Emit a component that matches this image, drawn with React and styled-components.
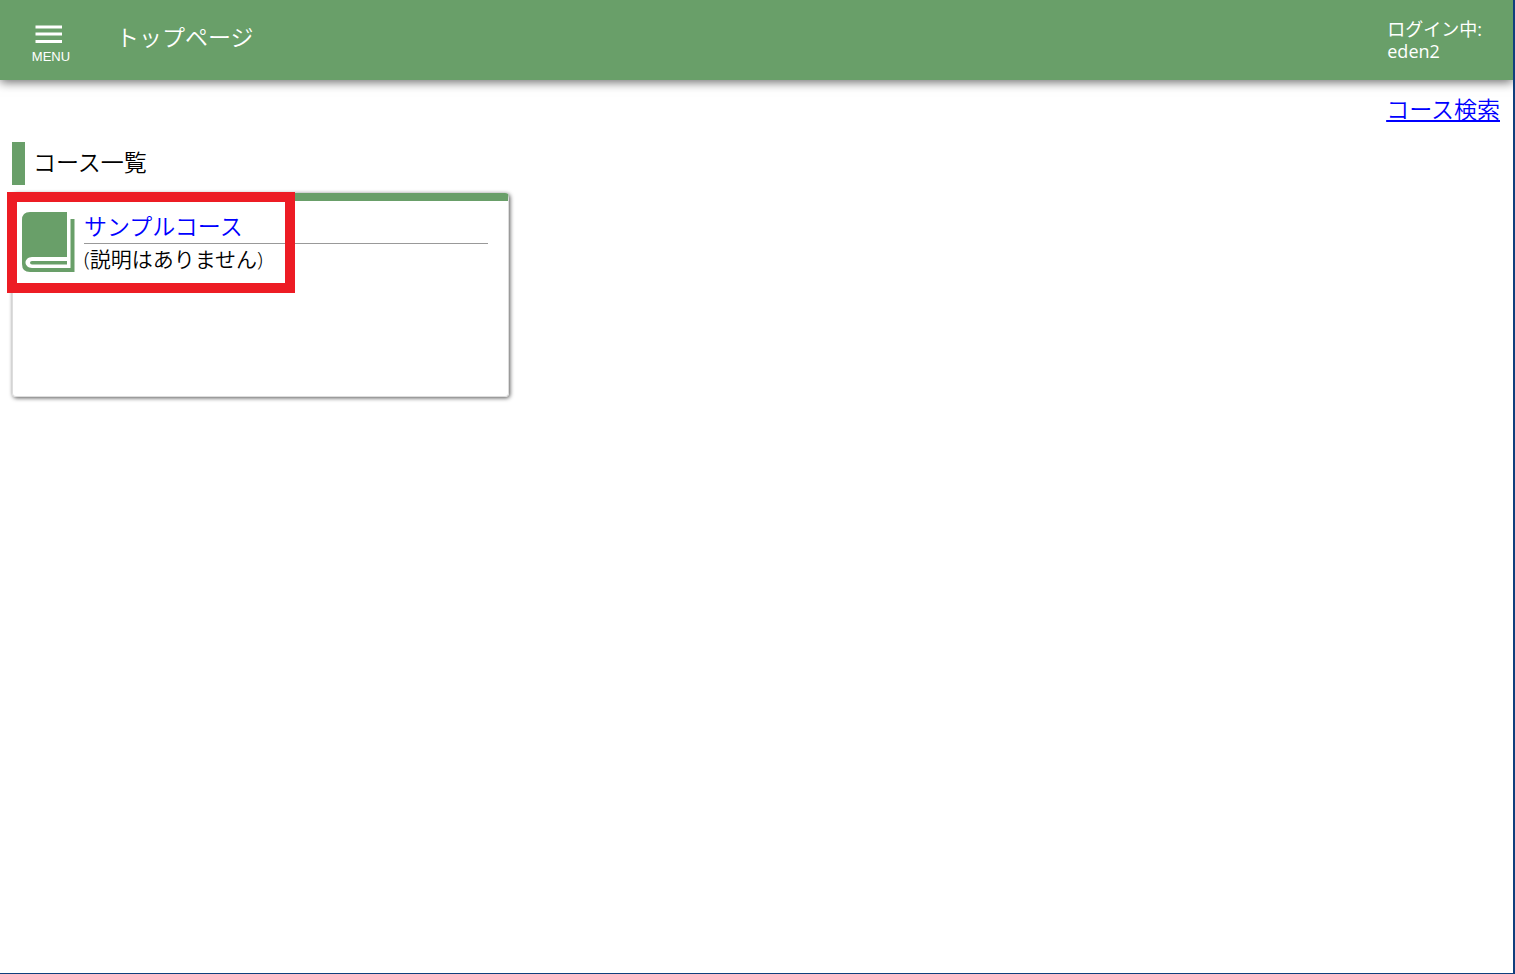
import React from "react";
import styled, { createGlobalStyle } from "styled-components";

const courses = [
  { name: "サンプルコース", description: "(説明はありません)", marked: true },
];

const App = () => {
  return (
    <Page>
      <GlobalStyle />
      <Header>
        <MenuButton type="button">
          <MenuIcon viewBox="0 0 28 20" aria-hidden="true">
            <path d="M0.5 3h26.5M0.5 10h26.5M0.5 17.500h26.5" />
          </MenuIcon>
          MENU
        </MenuButton>
        <Title>トップページ</Title>
        <LoginInfo>
          ログイン中:
          <br />
          eden2
        </LoginInfo>
      </Header>
      <Main>
        <SearchRow>
          <a href="#search">コース検索</a>
        </SearchRow>
        <SectionTitle>コース一覧</SectionTitle>
        <CourseList>
          {courses.map((course) => (
            <CourseCard key={course.name}>
              <BookIcon viewBox="0 0 53 60" aria-hidden="true">
                <path
                  fillRule="evenodd"
                  d="M8 0H45V45H10C6 45 3.5 48 3.5 50.5S6 56 10 56H48.500V7H52.500V60H8Q0 60 0 52V8Q0 0 8 0Z"
                />
                <path d="M10 49H45V52.500H10Q8 52.500 8 50.750Q8 49 10 49Z" />
              </BookIcon>
              <CourseBody>
                <CourseName>
                  <a href="#course">{course.name}</a>
                </CourseName>
                <Description>{course.description}</Description>
              </CourseBody>
              {course.marked && <Marker />}
            </CourseCard>
          ))}
        </CourseList>
      </Main>
    </Page>
  );
};

export default App;

const GlobalStyle = createGlobalStyle`
  * {
    box-sizing: border-box;
  }
  body {
    margin: 0;
    background: #ffffff;
    color: #000000;
    font-family: "Open Sans", "Noto Sans CJK JP", sans-serif;
    font-weight: 350;
  }
  a {
    color: #0000ff;
  }
`;

const Page = styled.div`
  min-height: 100vh;
  border-right: 2px solid #103f7d;
  border-bottom: 1px solid #103f7d;
`;

const Header = styled.header`
  display: flex;
  align-items: flex-start;
  height: 80px;
  padding: 0 31px;
  background: #699f69;
  color: #ffffff;
  box-shadow: 0 2px 10px rgba(0, 0, 0, 0.6);
  clip-path: inset(0 0 -20px 0);
`;

const MenuButton = styled.button`
  display: flex;
  flex-direction: column;
  width: 40px;
  margin-top: 24px;
  padding: 0;
  border: 0;
  background: none;
  color: inherit;
  font-family: "Liberation Sans", sans-serif;
  font-size: 13px;
  line-height: 18px;
  cursor: pointer;
`;

const MenuIcon = styled.svg`
  width: 28px;
  height: 20px;
  margin: 0 0 4px 4px;
  stroke: #ffffff;
  stroke-width: 3;
`;

const Title = styled.h1`
  margin: 20px 0 0 45px;
  font-size: 23px;
  font-weight: 350;
  line-height: 34px;
`;

const LoginInfo = styled.div`
  margin: 18px 0 0 auto;
  font-size: 18px;
  font-weight: 400;
  line-height: 22px;
`;

const Main = styled.main`
  padding: 12px 9px 12px 12px;
`;

const SearchRow = styled.div`
  padding-right: 4px;
  text-align: right;
  font-size: 23px;
  line-height: 34px;
`;

const SectionTitle = styled.h2`
  margin: 16px 0 8px;
  padding: 0 0 3px 8px;
  border-left: 13px solid #699f69;
  font-size: 23px;
  font-weight: 350;
  line-height: 40px;
`;

const CourseList = styled.div`
  display: grid;
  grid-template-columns: repeat(3, 1fr);
`;

const CourseCard = styled.article`
  position: relative;
  display: flex;
  align-items: flex-start;
  min-height: 204px;
  padding: 11px 20px 11px 9px;
  border: 1px solid #dddddd;
  border-top: 8px solid #699f69;
  border-radius: 4px;
  box-shadow: 1px 1px 4px #555555;
`;

const BookIcon = styled.svg`
  flex: none;
  width: 53px;
  height: 60px;
  margin-right: 9px;
  fill: #699f69;
`;

const CourseBody = styled.div`
  flex: 1;
`;

const CourseName = styled.h3`
  margin: 0;
  padding-bottom: 3px;
  border-bottom: 1px solid #999999;
  font-size: 23px;
  font-weight: 350;
  line-height: 28px;

  a {
    text-decoration: none;
  }
`;

const Description = styled.p`
  margin: 0;
  font-size: 21px;
  line-height: 30px;
`;

/* highlight frame laid over the corner of the card */
const Marker = styled.div`
  position: absolute;
  top: -9px;
  left: -6px;
  width: 288px;
  height: 101px;
  border: 10px solid #ed1c24;
  pointer-events: none;
`;
